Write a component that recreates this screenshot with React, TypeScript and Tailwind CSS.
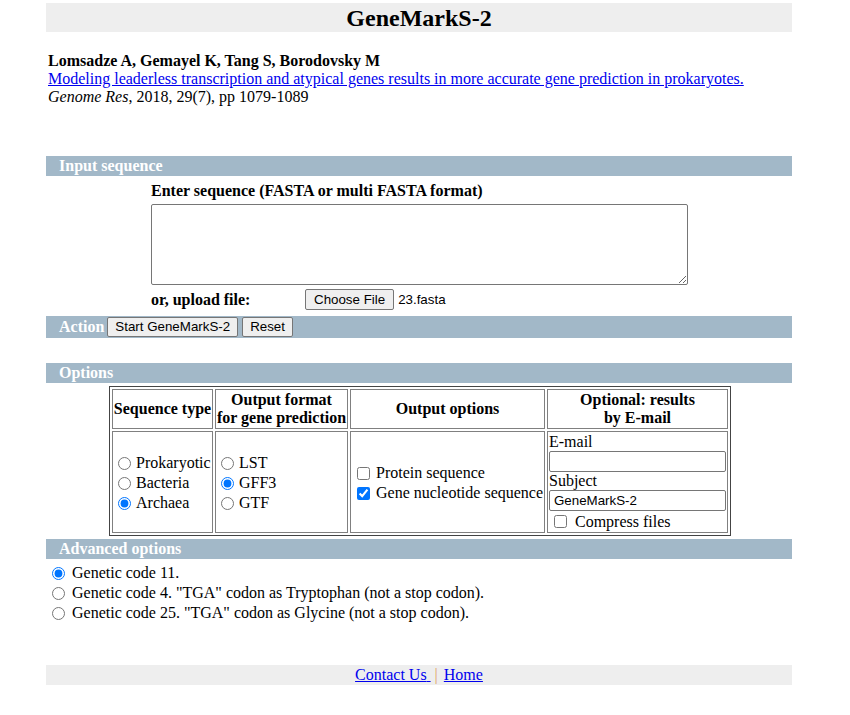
import React from "react";

const Bar = ({ children, className = "" }: { children: React.ReactNode; className?: string }) => (
  <div className={"bg-[#a2b8c8] text-white font-bold text-[16px] pl-[13px] flex items-center " + className}>
    {children}
  </div>
);

const btn =
  "bg-[#efefef] border border-[#767676] rounded-[2px] text-[13.33px] font-normal leading-[16px] text-black [font-family:Arial,'Liberation_Sans',sans-serif]";

const Radio = ({ checked, name, className = "ml-[5px] mr-[5px]" }: { checked?: boolean; name: string; className?: string }) => (
  <input
    type="radio"
    name={name}
    defaultChecked={checked}
    className={"w-[13px] h-[13px] shrink-0 " + className}
  />
);

const Check = ({ checked }: { checked?: boolean }) => (
  <input type="checkbox" defaultChecked={checked} className="w-[13px] h-[13px] ml-[5px] mr-[6px] shrink-0" />
);

const serif = "[font-family:'Liberation_Serif','Times_New_Roman',serif]";

export default function App() {
  return (
    <div className={"bg-white min-h-[715px] pt-[3px] text-black text-[16px] " + serif}>
      <div className="ml-[46px] w-[746px]">
        <div className="h-[29px] bg-[#eeeeee] flex items-center justify-center text-[24px] font-bold leading-none">
          GeneMarkS-2
        </div>

        <div className="mt-[20px] pl-[2px] leading-[18px]">
          <div className="font-bold">Lomsadze A, Gemayel K, Tang S, Borodovsky M</div>
          <div>
            <a href="#" className="text-[#0000ee] underline">
              Modeling leaderless transcription and atypical genes results in more accurate gene prediction in prokaryotes.
            </a>
          </div>
          <div>
            <i>Genome Res</i>, 2018, 29(7), pp 1079-1089
          </div>
        </div>

        <Bar className="mt-[50px] h-[20px]">Input sequence</Bar>

        <div className="pl-[105px]">
          <div className="mt-[6px] font-bold leading-[18px]">Enter sequence (FASTA or multi FASTA format)</div>
          <textarea className="block mt-[4px] w-[537px] h-[81px] border border-[#767676] rounded-[2px] bg-white" />
          <div className="mt-[4px] h-[21px] flex items-center">
            <span className="font-bold w-[154px]">or, upload file:</span>
            <button className={btn + " h-[21px] px-[8px]"}>Choose File</button>
            <span className="ml-[4px] text-[13.33px] [font-family:Arial,'Liberation_Sans',sans-serif]">23.fasta</span>
          </div>
        </div>

        <Bar className="mt-[6px] h-[22px]">
          <span className="mr-[2px]">Action</span>
          <button className={btn + " h-[20px] px-[7px] ml-[1px]"}>Start GeneMarkS-2</button>
          <button className={btn + " h-[20px] px-[7px] ml-[4px]"}>Reset</button>
        </Bar>

        <Bar className="mt-[25px] h-[20px]">Options</Bar>

        <div className="mt-[3px] pl-[63px]">
          <table className="border border-[#444] border-separate border-spacing-[2px] table-fixed w-[622px]">
            <colgroup>
              <col className="w-[101px]" />
              <col className="w-[133px]" />
              <col className="w-[195px]" />
              <col className="w-[181px]" />
            </colgroup>
            <tbody>
              <tr className="h-[40px]">
                <th className="border border-[#808080] font-bold leading-[18px] p-0 text-center whitespace-nowrap">Sequence type</th>
                <th className="border border-[#808080] font-bold leading-[18px] p-0 text-center whitespace-nowrap">
                  Output format
                  <br />
                  for gene prediction
                </th>
                <th className="border border-[#808080] font-bold leading-[18px] p-0 text-center whitespace-nowrap">Output options</th>
                <th className="border border-[#808080] font-bold leading-[18px] p-0 text-center whitespace-nowrap">
                  Optional: results
                  <br />
                  by E-mail
                </th>
              </tr>
              <tr className="h-[102px]">
                <td className="border border-[#808080] px-[1px] pt-[3px] pb-[1px] align-middle">
                  <div className="flex items-center h-[20px] whitespace-nowrap -ml-[1px]">
                    <Radio name="seq" />
                    Prokaryotic
                  </div>
                  <div className="flex items-center h-[20px] -ml-[1px]">
                    <Radio name="seq" />
                    Bacteria
                  </div>
                  <div className="flex items-center h-[20px] -ml-[1px]">
                    <Radio name="seq" checked />
                    Archaea
                  </div>
                </td>
                <td className="border border-[#808080] px-[1px] pt-[3px] pb-[1px] align-middle">
                  <div className="flex items-center h-[20px] -ml-[1px]">
                    <Radio name="fmt" />
                    LST
                  </div>
                  <div className="flex items-center h-[20px] -ml-[1px]">
                    <Radio name="fmt" checked />
                    GFF3
                  </div>
                  <div className="flex items-center h-[20px] -ml-[1px]">
                    <Radio name="fmt" />
                    GTF
                  </div>
                </td>
                <td className="border border-[#808080] px-[1px] pt-[3px] pb-[1px] align-middle">
                  <div className="flex items-center h-[20px] whitespace-nowrap">
                    <Check />
                    Protein sequence
                  </div>
                  <div className="flex items-center h-[20px] whitespace-nowrap">
                    <Check checked />
                    Gene nucleotide sequence
                  </div>
                </td>
                <td className="border border-[#808080] p-[1px] align-top leading-[18px]">
                  <div>E-mail</div>
                  <input
                    type="text"
                    className="block w-[177px] h-[21px] border border-[#767676] rounded-[2px] bg-white"
                  />
                  <div className="leading-[18px]">Subject</div>
                  <input
                    type="text"
                    defaultValue="GeneMarkS-2"
                    className="block w-[177px] h-[21px] border border-[#767676] rounded-[2px] bg-white px-[4px] text-[13.33px] [font-family:Arial,'Liberation_Sans',sans-serif]"
                  />
                  <div className="flex items-center h-[19px] mt-[1px] whitespace-nowrap">
                    <Check />
                    <span className="ml-[2px]">Compress files</span>
                  </div>
                </td>
              </tr>
            </tbody>
          </table>
        </div>

        <Bar className="mt-[3px] h-[20px]">Advanced options</Bar>

        <div className="mt-[4px] leading-[18px]">
          <div className="flex items-center h-[20px]">
            <Radio name="gc" checked className="ml-[6px] mr-[7px]" />
            Genetic code 11.
          </div>
          <div className="flex items-center h-[20px]">
            <Radio name="gc" className="ml-[6px] mr-[7px]" />
            Genetic code 4. "TGA" codon as Tryptophan (not a stop codon).
          </div>
          <div className="flex items-center h-[20px]">
            <Radio name="gc" className="ml-[6px] mr-[7px]" />
            Genetic code 25. "TGA" codon as Glycine (not a stop codon).
          </div>
        </div>

        <div className="mt-[42px] h-[20px] bg-[#eeeeee] flex items-center justify-center">
          <a href="#" className="text-[#0000ee] underline whitespace-pre">
            Contact Us{" "}
          </a>
          <span className="text-[#e0a060] ml-[4px] mr-[6px]">|</span>
          <a href="#" className="text-[#0000ee] underline">
            Home
          </a>
        </div>
      </div>
    </div>
  );
}
